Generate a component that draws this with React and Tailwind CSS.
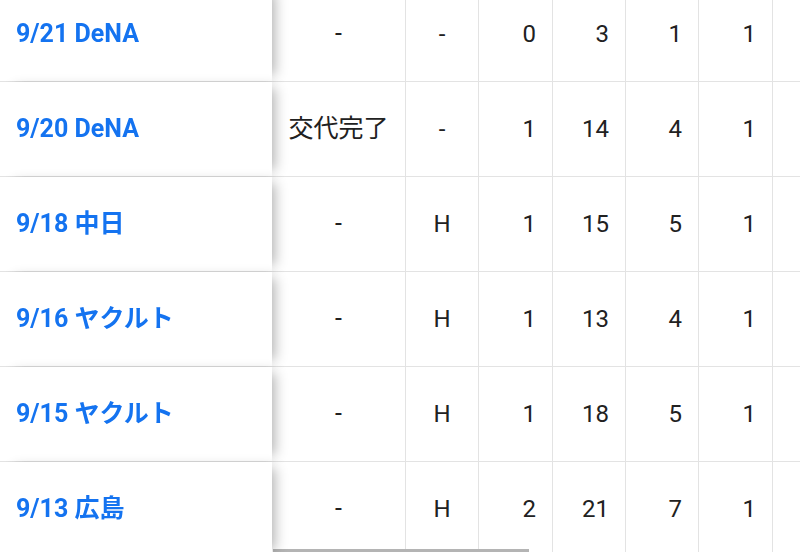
import React from "react";

const rows = [
  { game: "9/21 DeNA", status: "-", hold: "-", ip: "0", pitches: "3", batters: "1", hits: "1" },
  { game: "9/20 DeNA", status: "交代完了", hold: "-", ip: "1", pitches: "14", batters: "4", hits: "1" },
  { game: "9/18 中日", status: "-", hold: "H", ip: "1", pitches: "15", batters: "5", hits: "1" },
  { game: "9/16 ヤクルト", status: "-", hold: "H", ip: "1", pitches: "13", batters: "4", hits: "1" },
  { game: "9/15 ヤクルト", status: "-", hold: "H", ip: "1", pitches: "18", batters: "5", hits: "1" },
  { game: "9/13 広島", status: "-", hold: "H", ip: "2", pitches: "21", batters: "7", hits: "1" },
];

const Row = ({ row }) => (
  <div className="flex h-[95px] border-b border-[#e3e3e3]">
    {/* sticky game column */}
    <div className="sticky left-0 z-10 flex w-[272px] shrink-0 items-center bg-white pl-4 shadow-[9px_0_12px_-6px_rgba(0,0,0,0.3)]">
      <a href="#" className="text-[25px] font-bold text-[#1473f0]">
        {row.game}
      </a>
    </div>
    <div className="flex w-[134px] shrink-0 items-center justify-center border-r border-[#e3e3e3] text-[25px]">
      {row.status}
    </div>
    <div className="flex w-[73px] shrink-0 items-center justify-center border-r border-[#e3e3e3]">
      {row.hold}
    </div>
    <div className="flex w-[74px] shrink-0 items-center justify-end border-r border-[#e3e3e3] pr-4">
      {row.ip}
    </div>
    <div className="flex w-[73px] shrink-0 items-center justify-end border-r border-[#e3e3e3] pr-4">
      {row.pitches}
    </div>
    <div className="flex w-[73px] shrink-0 items-center justify-end border-r border-[#e3e3e3] pr-4">
      {row.batters}
    </div>
    <div className="flex w-[74px] shrink-0 items-center justify-end border-r border-[#e3e3e3] pr-4">
      {row.hits}
    </div>
    <div className="w-[74px] shrink-0 border-r border-[#e3e3e3]" />
    <div className="w-[74px] shrink-0" />
  </div>
);

export default function App() {
  return (
    <div
      className="relative h-[552px] w-[800px] overflow-hidden bg-white text-[24px] text-[#212121]"
      style={{ fontFamily: 'Roboto, "Noto Sans CJK JP", sans-serif' }}
    >
      <div className="-mt-[13px]">
        {rows.map((row, i) => (
          <Row key={i} row={row} />
        ))}
      </div>
      {/* horizontal scrollbar thumb */}
      <div className="absolute bottom-0 left-[273px] h-[3px] w-[256px] bg-[#b4b4b4]" />
    </div>
  );
}
